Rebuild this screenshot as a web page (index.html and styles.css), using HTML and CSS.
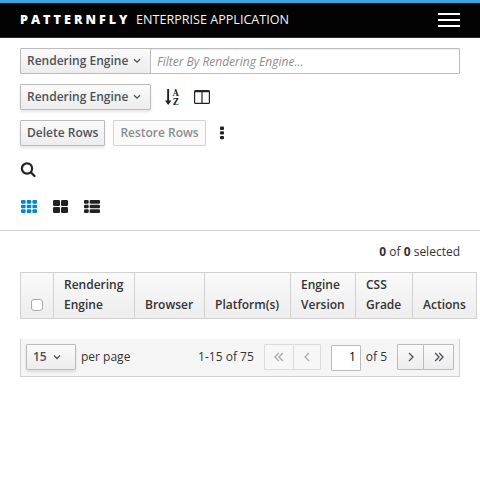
FILE: index.html
```
<!DOCTYPE html>
<html lang="en">
<head>
<meta charset="utf-8">
<title>PatternFly Enterprise Application</title>
<link rel="stylesheet" href="styles.css">
</head>
<body>
<header class="navbar">
  <div class="brand"><b>PATTERNFLY</b><span>ENTERPRISE APPLICATION</span></div>
  <div class="toggle"><i></i><i></i><i></i></div>
</header>
<section class="toolbar">
  <div class="row filter">
    <button class="btn select">Rendering Engine<svg class="caret" viewBox="0 0 8 8"><path d="M1 2.200 4 5.200 7 2.200"/></svg></button>
    <input class="query" type="text" placeholder="Filter By Rendering Engine...">
  </div>
  <div class="row">
    <button class="btn select">Rendering Engine<svg class="caret" viewBox="0 0 8 8"><path d="M1 2.200 4 5.200 7 2.200"/></svg></button>
    <svg class="icon sort" width="16" height="18" viewBox="0 0 16 18"><path d="M2.200 1h1.900v11.500h2.300L3.200 17 0 12.500h2.200z"/><text x="7.800" y="7.600">A</text><text x="8" y="16.800">Z</text></svg>
    <svg class="icon columns" width="16" height="14" viewBox="0 0 16 14"><path fill-rule="evenodd" d="M1.500 0h13Q16 0 16 1.500v11q0 1.500-1.500 1.500h-13Q0 14 0 12.500v-11Q0 0 1.500 0zM1.200 2.200v10q0 .6.600.6h5.600V2.200zm7.400 0v10.600h5.600q.6 0 .6-.6v-10z"/></svg>
  </div>
  <div class="row">
    <button class="btn">Delete Rows</button>
    <button class="btn restore" disabled>Restore Rows</button>
    <svg class="icon kebab" width="4" height="14" viewBox="0 0 4 14"><rect y=".5" width="4" height="3.400" rx="1"/><rect y="5.200" width="4" height="3.400" rx="1"/><rect y="9.900" width="4" height="3.400" rx="1"/></svg>
  </div>
  <div class="row find">
    <svg class="search" width="16" height="16" viewBox="0 0 16 16"><circle cx="7" cy="6.500" r="5.100"/><path d="M10.900 10.400 14.500 14"/></svg>
  </div>
  <div class="row views">
    <svg class="active" width="16" height="13" viewBox="0 0 16 13"><g id="r"><rect width="4.600" height="3.700" rx="1"/><rect x="5.700" width="4.600" height="3.700" rx="1"/><rect x="11.400" width="4.600" height="3.700" rx="1"/></g><use href="#r" y="4.650"/><use href="#r" y="9.300"/></svg>
    <svg class="cards" width="15" height="13" viewBox="0 0 15 13"><rect width="7" height="6" rx="1.200"/><rect x="8" width="7" height="6" rx="1.200"/><rect y="7" width="7" height="6" rx="1.200"/><rect x="8" y="7" width="7" height="6" rx="1.200"/></svg>
    <svg class="list" width="16" height="13" viewBox="0 0 16 13"><g id="l"><rect width="4.700" height="3.700" rx="1"/><rect x="5.700" width="10.300" height="3.700" rx="1"/></g><use href="#l" y="4.650"/><use href="#l" y="9.300"/></svg>
  </div>
</section>
<main>
  <div class="selected"><b>0</b> of <b>0</b> selected</div>
  <table>
    <colgroup><col class="c1"><col class="c2"><col class="c3"><col class="c4"><col class="c5"><col class="c6"><col class="c7"></colgroup>
    <thead><tr><th class="check"><input type="checkbox" aria-label="Select all rows"></th><th>Rendering<br>Engine</th><th>Browser</th><th>Platform(s)</th><th>Engine<br>Version</th><th>CSS<br>Grade</th><th>Actions</th></tr></thead>
  </table>
  <footer class="pager">
    <button class="btn size">15<svg class="caret" viewBox="0 0 8 8"><path d="M1 2.500 4 5.500 7 2.500"/></svg></button>
    <span class="per">per page</span>
    <span class="range">1-15 of 75</span>
    <div class="group">
      <button class="btn first" disabled><svg width="10" height="10" viewBox="0 0 10 10"><path d="M4.800 1 1 5l3.800 4M8.800 1 5 5l3.800 4"/></svg></button>
      <button class="btn prev" disabled><svg width="6" height="10" viewBox="0 0 6 10"><path d="M5 1 1 5l4 4"/></svg></button>
    </div>
    <input class="page" type="text" value="1" aria-label="Page">
    <span class="of">of 5</span>
    <div class="group">
      <button class="btn next"><svg width="6" height="10" viewBox="0 0 6 10"><path d="m1 1 4 4-4 4"/></svg></button>
      <button class="btn last"><svg width="10" height="10" viewBox="0 0 10 10"><path d="M1.200 1 5 5 1.200 9M5.200 1 9 5 5.200 9"/></svg></button>
    </div>
  </footer>
</main>
</body>
</html>
```
FILE: styles.css
```
* { box-sizing: border-box; }
body { margin: 0; height: 477px; overflow: hidden; background: #fff; color: #333; font: 12px/20px "Open Sans", sans-serif; }
button, input { font: inherit; margin: 0; }
svg { display: block; flex: none; fill: #222; }
.navbar { height: 38px; padding: 0 20px; display: flex; justify-content: space-between; align-items: center; background: #030303; border-top: 3px solid #39a5dc; border-bottom: 1px solid #292929; }
.brand { display: flex; color: #fff; font-size: 12.6px; white-space: nowrap; }
.brand b { width: 116px; font-weight: 800; letter-spacing: 3px; }
.brand span { color: #f5f5f5; }
.toggle { width: 22px; display: flex; flex-direction: column; gap: 4px; margin-top: -1px; }
.toggle i { height: 2px; background: #fff; }
.toolbar { height: 193px; padding: 10px 20px 0; border-bottom: 1px solid #d1d1d1; }
.row { height: 26px; margin-bottom: 10px; display: flex; align-items: center; }
.btn { height: 26px; padding: 0 6px; display: flex; align-items: center; flex: none; color: #4d5258; font-weight: 600; line-height: 22px; white-space: nowrap; background: linear-gradient(#fafafa, #ededed); border: 1px solid #bbb; border-radius: 1px; box-shadow: 0 2px 3px rgba(3, 3, 3, .1); }
.btn:disabled { color: #8b8d8f; background: #fafafa; border-color: #d1d1d1; box-shadow: none; }
.btn svg { fill: none; stroke: currentColor; stroke-width: 1.300; }
.select { width: 131px; }
.caret { width: 8px; height: 8px; margin-left: 5px; }
.filter .btn { box-shadow: none; border-radius: 1px 0 0 1px; }
.query { flex: 1; min-width: 0; height: 26px; margin-left: -1px; padding: 1px 6px 0; border: 1px solid #bbb; border-radius: 0 1px 1px 0; box-shadow: inset 0 1px 1px rgba(3, 3, 3, .075); }
.query::placeholder { color: #8c8c8c; font-style: italic; opacity: 1; }
.sort { margin-left: 14px; }
.sort text { font: bold 8.500px "DejaVu Serif Condensed", "DejaVu Serif", serif; }
.columns { margin-left: 13px; }
.restore { width: 93px; margin-left: 8px; }
.kebab { margin-left: 14px; }
.find { height: 28px; }
.search { fill: none; stroke: #222; stroke-width: 2.2; stroke-linecap: round; }
.views { height: 25px; padding-left: 1px; }
.cards, .list { margin-left: 16px; }
.active { fill: #0088ce; }
.selected { height: 41px; padding: 11px 20px 0; text-align: right; }
table { width: 457px; margin-left: 20px; table-layout: fixed; border-collapse: collapse; }
th { height: 46px; padding: 2px 0 3px 10px; border: 1px solid #d1d1d1; text-align: left; vertical-align: bottom; font-weight: 600; background: linear-gradient(#fafafa, #ededed); background-clip: padding-box; }
.c1 { width: 33px; } .c2 { width: 81px; } .c3 { width: 70px; } .c4 { width: 86px; } .c5 { width: 65px; } .c6 { width: 57px; } .c7 { width: 64px; }
.check input { display: block; width: 12px; height: 12px; margin: 0 0 4px; appearance: none; border: 1px solid #aaa; border-radius: 3px; background: #fff; }
.pager { height: 38px; margin: 20px 20px 0; padding: 0 5px 1px; display: flex; align-items: center; background: #f5f5f5; border: 1px solid #d1d1d1; border-top: 0; }
.size { width: 50px; }
.size .caret { margin-left: 6px; }
.per { margin-left: 5px; }
.range { margin-left: auto; }
.group { display: flex; margin-left: 10px; }
.group .btn { padding: 0; justify-content: center; width: 28px; box-shadow: none; }
.group .btn:disabled { color: #aaa; background: #f7f7f7; border-color: #dcdcdc; }
.group .first { width: 30px; }
.group .next { width: 27px; }
.group .last { width: 31px; }
.group .btn + .btn { margin-left: -1px; }
.page { width: 30px; height: 26px; margin: 1px 0 0 10px; padding: 0 4px 2px; text-align: right; border: 1px solid #bbb; border-radius: 1px; }
.of { margin-left: 5px; }
```
